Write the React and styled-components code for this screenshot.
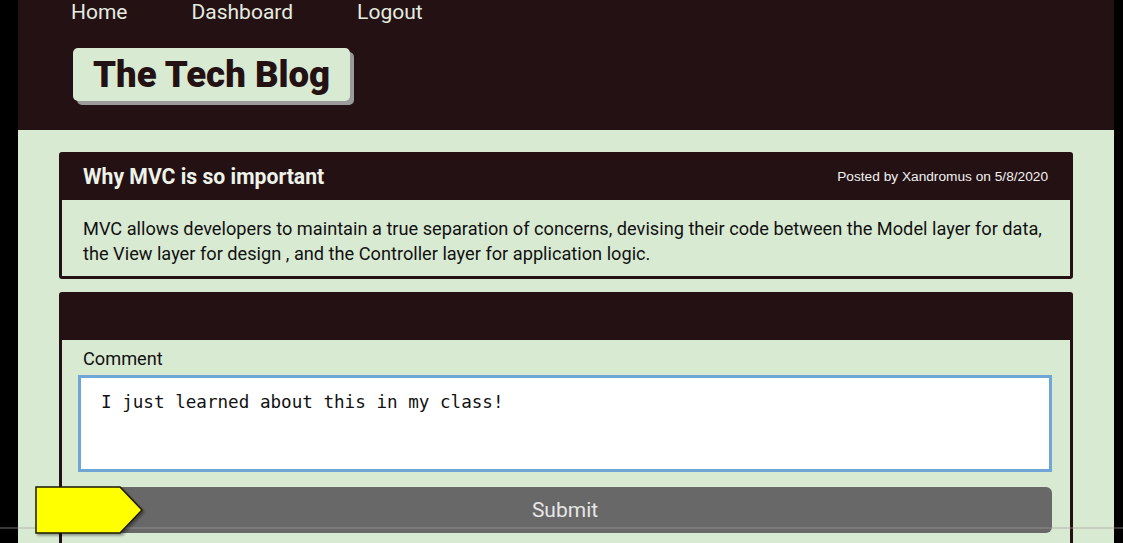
import React from "react";
import styled, { createGlobalStyle } from "styled-components";

const Global = createGlobalStyle`
  html, body { margin: 0; padding: 0; background: #000; overflow: hidden; }
  body { font-family: Roboto, "Liberation Sans", sans-serif; }
  * { box-sizing: border-box; }
`;

const DARK = "#241113";
const LIGHT = "#d9ead3";

const Frame = styled.div`
  display: flex;
  width: 1123px;
  height: 543px;
  background: #000;
  overflow: hidden;
  position: relative;
`;

const Strip = styled.div`
  width: ${(p) => p.$w}px;
  flex: none;
  background: #000;
`;

const Main = styled.div`
  flex: 1;
  display: flex;
  flex-direction: column;
  background: ${LIGHT};
  position: relative;
  min-height: 0;
`;

const Header = styled.header`
  flex: none;
  height: 130px;
  background: ${DARK};
  padding-left: 53px;
  display: flex;
  flex-direction: column;
`;

const Nav = styled.nav`
  display: flex;
  gap: 64px;
  height: 24px;
`;

const NavLink = styled.a`
  color: #e4ece0;
  font-size: 21px;
  line-height: 24px;
  text-decoration: none;
`;

const Logo = styled.h1`
  margin: 24px 0 0 2px;
  align-self: flex-start;
  background: ${LIGHT};
  color: ${DARK};
  font-size: 36.6px;
  font-weight: 900;
  line-height: 54px;
  height: 53px;
  padding: 0 20px 0 20px;
  border-radius: 5px;
  box-shadow: 4px 4px 0 #9a9a9a;
  white-space: nowrap;
`;

const Content = styled.main`
  flex: none;
  padding: 22px 41px 0;
  display: flex;
  flex-direction: column;
  gap: 13px;
`;

const Card = styled.section`
  background: ${DARK};
  border-radius: 3px;
  padding: 0 3px 3px;
  display: flex;
  flex-direction: column;
`;

const CardHead = styled.div`
  height: 48px;
  display: flex;
  align-items: center;
  justify-content: space-between;
  padding: 0 22px 0 21px;
`;

const Title = styled.h2`
  margin: 0;
  color: #eef3ea;
  font-size: 21.2px;
  font-weight: 700;
`;

const Meta = styled.span`
  color: #f1f1f1;
  font-family: "Liberation Sans", Arial, sans-serif;
  font-size: 13.7px;
`;

const CardBody = styled.div`
  background: ${LIGHT};
  color: #111;
  padding: ${(p) => p.$pad};
`;

const Text = styled.p`
  margin: 0;
  font-size: 18.2px;
  line-height: 25px;
`;

const Label = styled.label`
  display: block;
  font-size: 18.2px;
  line-height: 20px;
  color: #111;
  margin: 0 0 6px 5px;
`;

const Area = styled.div`
  height: 97px;
  background: #fff;
  border: 3px solid #6fa6d6;
  padding: 13px 20px;
  font-family: "DejaVu Sans Mono", "Liberation Mono", monospace;
  font-size: 17.6px;
  line-height: 22px;
  color: #111;
`;

const Button = styled.button`
  display: block;
  width: 100%;
  margin-top: 15px;
  height: 46px;
  border: none;
  border-radius: 6px;
  background: #686868;
  color: #e6e6e6;
  font-family: Roboto, sans-serif;
  font-size: 21px;
`;

const Pointer = styled.svg`
  position: absolute;
  left: 34px;
  top: 485px;
  filter: drop-shadow(2px 2px 1px rgba(0,0,0,0.35));
`;

const ScanLine = styled.div`
  position: absolute;
  left: 0;
  right: 0;
  top: 527px;
  height: 2px;
  background: rgba(160, 160, 160, 0.35);
  pointer-events: none;
`;

export default function App() {
  return (
    <>
      <Global />
      <Frame>
        <Strip $w={18} />
        <Main>
          <Header>
            <Nav>
              <NavLink href="#">Home</NavLink>
              <NavLink href="#">Dashboard</NavLink>
              <NavLink href="#">Logout</NavLink>
            </Nav>
            <Logo>The Tech Blog</Logo>
          </Header>
          <Content>
            <Card>
              <CardHead>
                <Title>Why MVC is so important</Title>
                <Meta>Posted by Xandromus on 5/8/2020</Meta>
              </CardHead>
              <CardBody $pad="16px 20px 10px 21px">
                <Text>
                  MVC allows developers to maintain a true separation of concerns, devising their code between the Model layer for data, the View layer for design , and the Controller layer for application logic.
                </Text>
              </CardBody>
            </Card>
            <Card>
              <CardHead />
              <CardBody $pad="9px 18px 10px 16px">
                <Label>Comment</Label>
                <Area>I just learned about this in my class!</Area>
                <Button>Submit</Button>
              </CardBody>
            </Card>
          </Content>
        </Main>
        <Strip $w={9} />
        <ScanLine />
        <Pointer width="112" height="52" viewBox="0 0 112 52">
          <polygon points="2,2 86,2 108,25 86,48 2,48" fill="#ffff00" stroke="#1a1a00" strokeWidth="1.5" />
        </Pointer>
      </Frame>
    </>
  );
}
